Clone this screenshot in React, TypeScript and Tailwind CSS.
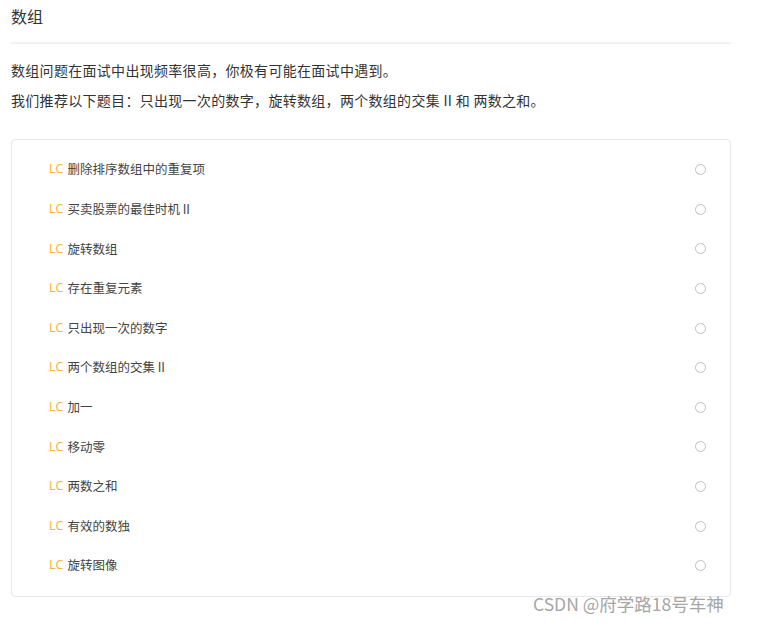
import React from 'react';

const problems = [
  '删除排序数组中的重复项',
  '买卖股票的最佳时机 II',
  '旋转数组',
  '存在重复元素',
  '只出现一次的数字',
  '两个数组的交集 II',
  '加一',
  '移动零',
  '两数之和',
  '有效的数独',
  '旋转图像',
];

export default function App() {
  return (
    <div
      className="relative min-h-[635px] bg-white text-[#333]"
      style={{ fontFamily: '"Microsoft YaHei", "Noto Sans CJK SC", "Noto Sans", sans-serif' }}
    >
      <div className="ml-[11px] w-[720px]">
        {/* Title */}
        <h1 className="pt-[4px] text-[16px] leading-[24px] text-[#333]">数组</h1>
        <div className="mt-[14px] h-[2px] bg-[#f2f2f2]" />

        {/* Intro */}
        <div className="pt-[11px] text-[14px] leading-[30px] tracking-[0.3px] text-[#333]">
          <p>数组问题在面试中出现频率很高，你极有可能在面试中遇到。</p>
          <p>我们推荐以下题目：只出现一次的数字，旋转数组，两个数组的交集 II 和 两数之和。</p>
        </div>

        {/* Problem list */}
        <div className="mt-[24px] rounded-[4px] border border-[#e8e8e8] py-[10px]">
          {problems.map((title) => (
            <div key={title} className="flex h-[39.6px] items-center justify-between pl-[37px] pr-[24px]">
              <div className="flex items-center text-[12.5px]">
                <span className="mr-[4px] text-[#f5b041]" style={{ fontFamily: '"Open Sans", sans-serif' }}>
                  LC
                </span>
                <span className="text-[#444]">{title}</span>
              </div>
              <span className="h-[11px] w-[11px] rounded-full border border-[#bfbfbf]" />
            </div>
          ))}
        </div>
      </div>

      {/* Watermark */}
      <div className="absolute left-[533px] top-[592px] text-[17.5px] leading-[24px] text-[#a6a6a6]">
        CSDN @府学路18号车神
      </div>
    </div>
  );
}
